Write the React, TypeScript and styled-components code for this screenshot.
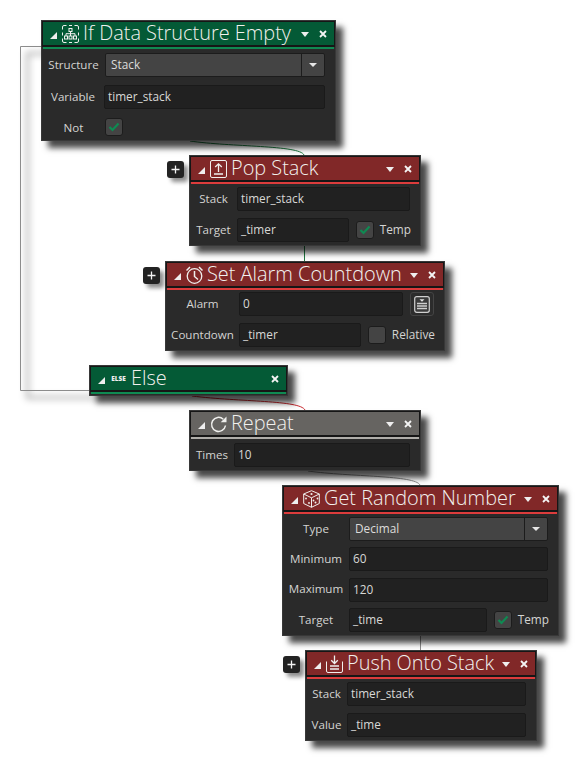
import React from "react";
import styled, { createGlobalStyle } from "styled-components";

const GlobalStyle = createGlobalStyle`
  html, body {
    margin: 0;
    padding: 0;
    background: #fff;
    font-family: "Open Sans", "Liberation Sans", sans-serif;
  }
`;

type Tone = "green" | "red" | "gray";

const HEAD: Record<Tone, string> = { green: "#045a36", red: "#812828", gray: "#666461" };
const STRIPE: Record<Tone, string> = { green: "#0f8a52", red: "#dc3c3c", gray: "#b0aeaa" };

const Canvas = styled.div`
  position: relative;
  width: 579px;
  height: 761px;
  overflow: hidden;
  background: #fff;
`;

const Wires = styled.svg`
  position: absolute;
  left: 0;
  top: 0;
`;

const NodeBox = styled.div<{ $x: number; $y: number; $w: number }>`
  position: absolute;
  left: ${(p) => p.$x}px;
  top: ${(p) => p.$y}px;
  width: ${(p) => p.$w}px;
  box-sizing: border-box;
  background: #2a2a2a;
  border: 1px solid #383838;
  box-shadow: 7px 7px 6px rgba(0, 0, 0, 0.72);
`;

const Header = styled.div<{ $tone: Tone }>`
  display: flex;
  align-items: center;
  height: 23px;
  padding: 0 7px 0 5px;
  background: ${(p) => HEAD[p.$tone]};
  border: 1px solid #161616;
  border-bottom-width: 2px;
`;

const Stripe = styled.div<{ $tone: Tone }>`
  height: 2px;
  margin: 0 1px;
  background: ${(p) => STRIPE[p.$tone]};
  &:last-child {
    margin-bottom: 1px;
  }
`;

const Collapse = styled.span`
  width: 0;
  height: 0;
  margin: 3px 5px 0 2px;
  border-left: 7px solid transparent;
  border-bottom: 7px solid #eee;
  flex: none;
`;

const IconWrap = styled.span`
  display: flex;
  width: 17px;
  height: 18px;
  flex: none;
  margin-right: 4px;
`;

const Title = styled.span`
  flex: 1;
  margin-top: -2px;
  font-size: 19.9px;
  font-weight: 350;
  line-height: 23px;
  color: #f2f1ee;
  white-space: nowrap;
`;

const Caret = styled.span`
  width: 0;
  height: 0;
  margin: 2px 10px 0 4px;
  border-left: 4.5px solid transparent;
  border-right: 4.5px solid transparent;
  border-top: 5px solid #eee;
  flex: none;
`;

const CloseMark = styled.svg`
  flex: none;
`;

const Body = styled.div<{ $top: number; $gap: number }>`
  display: flex;
  flex-direction: column;
  gap: ${(p) => p.$gap}px;
  padding: ${(p) => p.$top}px 10px 3px 0;
`;

const Label = styled.span`
  margin-bottom: 2px;
  font-size: 11.6px;
  color: #d4d4d2;
  text-align: center;
  white-space: nowrap;
`;

const Row = styled.div<{ $label: number }>`
  display: grid;
  grid-template-columns: ${(p) => p.$label}px 1fr;
  align-items: center;
  height: 24px;
`;

const CheckRow = styled(Row)`
  height: 17px;
  margin: 1px 0 2px;
  ${Label} {
    margin-bottom: 0;
  }
`;

const Controls = styled.div`
  display: flex;
  align-items: center;
  gap: 7px;
  min-width: 0;
`;

const Field = styled.div`
  flex: 1;
  height: 24px;
  box-sizing: border-box;
  padding-left: 3px;
  background: #212121;
  border: 1px solid #1a1a1a;
  border-radius: 2px;
  font-size: 11.8px;
  line-height: 21px;
  color: #d8d8d6;
`;

const Select = styled.div`
  flex: 1;
  display: flex;
  height: 24px;
  box-sizing: border-box;
  background: #444;
  border: 1px solid #1c1c1c;
  border-radius: 2px;
  font-size: 11.8px;
  line-height: 21px;
  color: #dcdcda;
`;

const SelectText = styled.span`
  flex: 1;
  padding-left: 5px;
`;

const SelectArrow = styled.span`
  display: flex;
  align-items: center;
  justify-content: center;
  width: 22px;
  border-left: 1px solid #1c1c1c;
  &::after {
    content: "";
    border-left: 4px solid transparent;
    border-right: 4px solid transparent;
    border-top: 4px solid #e6e6e6;
  }
`;

const Check = styled.span`
  display: flex;
  align-items: center;
  justify-content: center;
  width: 16px;
  height: 16px;
  flex: none;
  background: #444;
  border: 1px solid #1c1c1c;
  border-radius: 3px;
`;

const CheckLabel = styled.span`
  margin: -2px -1px 0 -1px;
  font-size: 11.8px;
  color: #d4d4d2;
`;

const PickerButton = styled.span`
  display: flex;
  align-items: center;
  justify-content: center;
  width: 24px;
  height: 24px;
  flex: none;
  box-sizing: border-box;
  background: #2c2c2c;
  border: 1px solid #444;
  border-radius: 3px;
`;

const PlusButton = styled.span<{ $x: number; $y: number }>`
  position: absolute;
  left: ${(p) => p.$x}px;
  top: ${(p) => p.$y}px;
  display: flex;
  align-items: center;
  justify-content: center;
  width: 17px;
  height: 17px;
  background: #232323;
  border-radius: 3px;
  box-shadow: 4px 4px 4px rgba(0, 0, 0, 0.45);
`;

const ElseIcon = styled.span`
  width: 17px;
  font-size: 6.5px;
  font-weight: 800;
  letter-spacing: -0.1px;
  color: #eee;
  text-align: center;
  line-height: 18px;
`;

const stroke = { fill: "none", stroke: "#f0f0ee", strokeWidth: 1 };

const TreeIcon = () => (
  <svg width="17" height="18" viewBox="0 0 17 18" {...stroke}>
    <path d="M.5 4.500V2Q.5.500 2 .500h2.500M12.500.500H15q1.500 0 1.500 1.500v2.500M16.500 13.500V16q0 1.500-1.500 1.500h-2.500M4.500 17.500H2Q.5 17.500.5 16v-2.500M.5 7.500v3M16.500 7.500v3M7 .5h3M7 17.500h3" />
    <rect x="7" y="3.500" width="3" height="3" />
    <rect x="2.500" y="11" width="3" height="3" />
    <rect x="7" y="11" width="3" height="3" />
    <rect x="11.500" y="11" width="3" height="3" />
    <path d="M8.500 6.500V11M4 11V8.700h9V11" />
  </svg>
);

const PopIcon = () => (
  <svg width="17" height="18" viewBox="0 0 17 18" {...stroke}>
    <rect x=".5" y=".5" width="16" height="17" rx="1.500" />
    <path d="M8.500 12V4M5.200 7l3.300-3.200L11.800 7M4 14h9" strokeWidth="1.300" />
  </svg>
);

const AlarmIcon = () => (
  <svg width="17" height="18" viewBox="0 0 17 18" {...stroke} strokeWidth="1.300">
    <circle cx="8.500" cy="10" r="7.300" />
    <path d="M8.500 5v5.500l3.500 3M.5 4.500L4 1M16.500 4.500L13 1" strokeWidth="1.500" />
  </svg>
);

const RepeatIcon = () => (
  <svg width="17" height="18" viewBox="0 0 17 18" {...stroke} strokeWidth="1.500">
    <path d="M15.500 10.500A7 7 0 1 1 13.300 4.200" />
    <path d="M16.500 1.500v5.800h-5.800z" fill="#f0f0ee" stroke="none" />
  </svg>
);

const DiceIcon = () => (
  <svg width="17" height="18" viewBox="0 0 17 18" {...stroke}>
    <path d="M8.500 .7L16.300 4V13.500L8.500 17.300L.7 13.500V4zM.7 4L8.500 7.800L16.300 4M8.500 7.800V17.300" />
    <g fill="#f0f0ee" stroke="none">
      <circle cx="8.500" cy="4" r="1.100" />
      <circle cx="3" cy="8.500" r="0.900" />
      <circle cx="6" cy="13" r="0.900" />
      <circle cx="12.500" cy="12.500" r="1" />
      <circle cx="14.500" cy="8.500" r="0.900" />
      <circle cx="10.500" cy="10.500" r="0.900" />
    </g>
  </svg>
);

const PushIcon = () => (
  <svg width="17" height="18" viewBox="0 0 17 18" {...stroke}>
    <path d="M.5 6.500V16q0 1.500 1.500 1.500h13q1.500 0 1.500-1.500V6.500" />
    <path d="M8.500 .5v7.500M5.200 5.300l3.300 3.200 3.300-3.200" strokeWidth="1.300" />
    <path d="M4 11h9M4 14h9" strokeWidth="1.300" />
  </svg>
);

const Tick = () => (
  <svg width="12" height="10" viewBox="0 0 12 10">
    <path d="M1.500 5l3 3 6-6.500" fill="none" stroke="#0f8a52" strokeWidth="2.200" />
  </svg>
);

const Close = () => (
  <CloseMark width="8" height="8" viewBox="0 0 8 8">
    <path d="M1 1l6 6M7 1l-6 6" stroke="#f4f4f4" strokeWidth="1.800" />
  </CloseMark>
);

const Picker = () => (
  <svg width="16" height="17" viewBox="0 0 16 17">
    <rect x=".7" y=".7" width="14.600" height="15.600" rx="2" fill="#3a3a3a" stroke="#cfcfcf" strokeWidth="1.200" />
    <path d="M5.500 3.200h5L8 5.700z" fill="#e4e4e4" />
    <path d="M3 7.500h10M3 10h10M3 12.500h10" stroke="#cfcfcf" strokeWidth="1.500" />
  </svg>
);

const Plus = () => (
  <svg width="9" height="9" viewBox="0 0 9 9">
    <path d="M4.500.5v8M.5 4.500h8" stroke="#f4f4f4" strokeWidth="1.300" />
  </svg>
);

interface NodeProps {
  x: number;
  y: number;
  w: number;
  tone: Tone;
  title: string;
  icon: React.ReactNode;
  menu?: boolean;
  top?: number;
  gap?: number;
  children?: React.ReactNode;
}

const Node = ({ x, y, w, tone, title, icon, menu = true, top = 3, gap = 7, children }: NodeProps) => (
  <NodeBox $x={x} $y={y} $w={w}>
    <Header $tone={tone}>
      <Collapse />
      <IconWrap>{icon}</IconWrap>
      <Title>{title}</Title>
      {menu && <Caret />}
      <Close />
    </Header>
    <Stripe $tone={tone} />
    {children && (
      <Body $top={top} $gap={gap}>
        {children}
      </Body>
    )}
  </NodeBox>
);

const TextRow = ({ label, col, value }: { label: string; col: number; value: string }) => (
  <Row $label={col}>
    <Label>{label}</Label>
    <Controls>
      <Field>{value}</Field>
    </Controls>
  </Row>
);

const SelectRow = ({ label, col, value }: { label: string; col: number; value: string }) => (
  <Row $label={col}>
    <Label>{label}</Label>
    <Controls>
      <Select>
        <SelectText>{value}</SelectText>
        <SelectArrow />
      </Select>
    </Controls>
  </Row>
);

const TempRow = ({ col, value }: { col: number; value: string }) => (
  <Row $label={col}>
    <Label>Target</Label>
    <Controls>
      <Field>{value}</Field>
      <Check>
        <Tick />
      </Check>
      <CheckLabel>Temp</CheckLabel>
    </Controls>
  </Row>
);

const App = () => (
  <Canvas>
    <GlobalStyle />
    <Wires width="579" height="761" fill="none">
      <defs>
        <filter id="soft" x="-20%" y="-5%" width="140%" height="110%">
          <feGaussianBlur stdDeviation="3.500" />
        </filter>
      </defs>
      <path d="M41 46.500H20.500V390.500H89" stroke="rgba(0,0,0,0.4)" strokeWidth="2.500" transform="translate(7 7)" filter="url(#soft)" />
      <path d="M41 46.500H20.500V390.500H89" stroke="#8c8c8c" strokeWidth="1" />
      <path d="M190 141C230 147 300 145 304 155" stroke="#1d7a3f" />
      <path d="M304.500 246V261" stroke="#1d7a3f" />
      <path d="M192 396C240 402 300 400 305 410" stroke="#c8262c" />
      <path d="M308 471C350 477 415 475 420 485" stroke="#8c8c8c" />
      <path d="M420.500 636V650" stroke="#8c8c8c" />
    </Wires>

    <Node x={41} y={20} w={295} tone="green" title="If Data Structure Empty" icon={<TreeIcon />} top={4} gap={8}>
      <SelectRow label="Structure" col={63} value="Stack" />
      <TextRow label="Variable" col={62} value="timer_stack" />
      <CheckRow $label={63}>
        <Label>Not</Label>
        <Controls>
          <Check>
            <Tick />
          </Check>
        </Controls>
      </CheckRow>
    </Node>

    <Node x={189} y={155} w={232} tone="red" title="Pop Stack" icon={<PopIcon />}>
      <TextRow label="Stack" col={47} value="timer_stack" />
      <TempRow col={47} value="_timer" />
    </Node>
    <PlusButton $x={167} $y={161}>
      <Plus />
    </PlusButton>

    <Node x={165} y={261} w={280} tone="red" title="Set Alarm Countdown" icon={<AlarmIcon />} top={2}>
      <Row $label={73}>
        <Label>Alarm</Label>
        <Controls>
          <Field>0</Field>
          <PickerButton>
            <Picker />
          </PickerButton>
        </Controls>
      </Row>
      <Row $label={73}>
        <Label>Countdown</Label>
        <Controls>
          <Field>_timer</Field>
          <Check />
          <CheckLabel>Relative</CheckLabel>
        </Controls>
      </Row>
    </Node>
    <PlusButton $x={143} $y={267}>
      <Plus />
    </PlusButton>

    <Node x={89} y={365} w={199} tone="green" title="Else" icon={<ElseIcon>ELSE</ElseIcon>} menu={false} />

    <Node x={189} y={410} w={232} tone="gray" title="Repeat" icon={<RepeatIcon />} top={4}>
      <TextRow label="Times" col={44} value="10" />
    </Node>

    <Node x={282} y={485} w={277} tone="red" title="Get Random Number" icon={<DiceIcon />} gap={6.4}>
      <SelectRow label="Type" col={66} value="Decimal" />
      <TextRow label="Minimum" col={66} value="60" />
      <TextRow label="Maximum" col={66} value="120" />
      <TempRow col={66} value="_time" />
    </Node>

    <Node x={305} y={650} w={232} tone="red" title="Push Onto Stack" icon={<PushIcon />}>
      <TextRow label="Stack" col={41} value="timer_stack" />
      <TextRow label="Value" col={41} value="_time" />
    </Node>
    <PlusButton $x={283} $y={656}>
      <Plus />
    </PlusButton>
  </Canvas>
);

export default App;
